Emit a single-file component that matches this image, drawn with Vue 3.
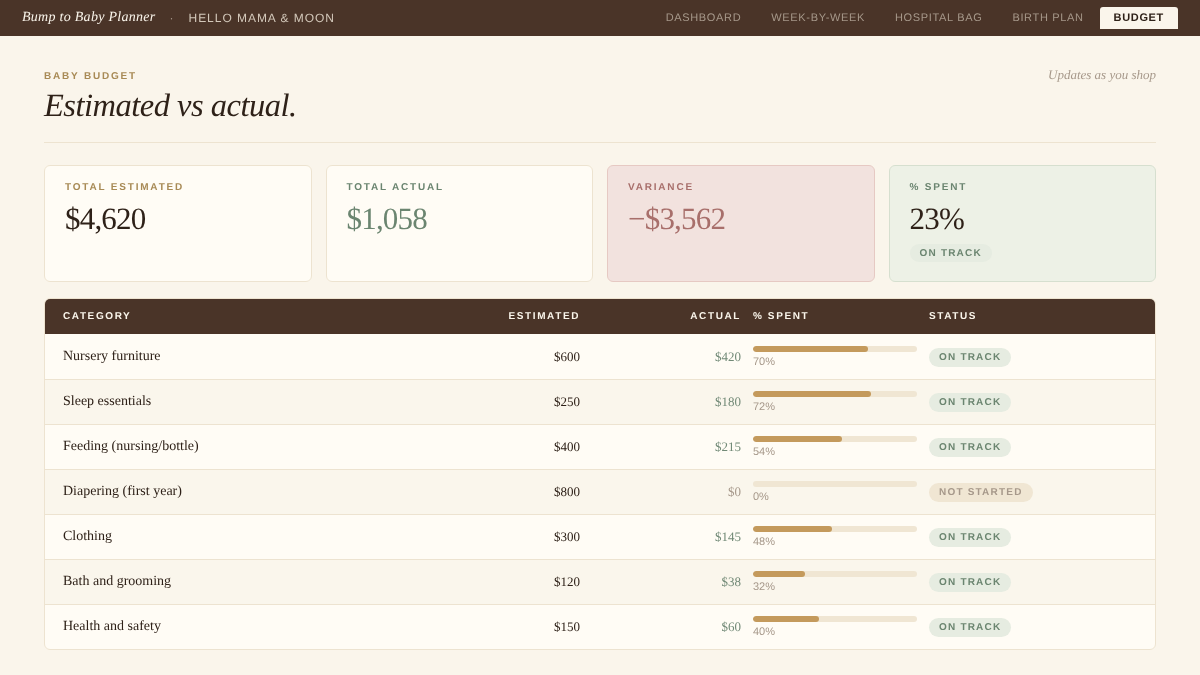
<template>
  <div class="page">
    <header class="topbar">
      <div class="brand">
        <span class="brand-name">Bump to Baby Planner</span>
        <span class="brand-dot">·</span>
        <span class="brand-sub">HELLO MAMA &amp; MOON</span>
      </div>
      <nav class="nav">
        <a
          v-for="item in navItems"
          :key="item"
          class="nav-item"
          :class="{ active: item === 'BUDGET' }"
        >{{ item }}</a>
      </nav>
    </header>

    <main class="content">
      <div class="title-row">
        <div>
          <div class="eyebrow">BABY BUDGET</div>
          <h1>Estimated vs actual.</h1>
        </div>
        <div class="note">Updates as you shop</div>
      </div>

      <section class="stats">
        <div v-for="stat in stats" :key="stat.label" class="stat" :class="stat.kind">
          <div class="stat-label">{{ stat.label }}</div>
          <div class="stat-value">{{ stat.value }}</div>
          <span v-if="stat.pill" class="stat-pill">{{ stat.pill }}</span>
        </div>
      </section>

      <section class="table">
        <div class="row head">
          <div>CATEGORY</div>
          <div class="right">ESTIMATED</div>
          <div class="right">ACTUAL</div>
          <div>% SPENT</div>
          <div>STATUS</div>
        </div>
        <div v-for="row in rows" :key="row.name" class="row body">
          <div class="name">{{ row.name }}</div>
          <div class="right est">{{ row.estimated }}</div>
          <div class="right actual" :class="{ zero: row.pct === 0 }">{{ row.actual }}</div>
          <div class="spent">
            <div class="track">
              <div class="fill" :style="{ width: row.pct + '%' }"></div>
            </div>
            <div class="pct">{{ row.pct }}%</div>
          </div>
          <div>
            <span class="badge" :class="{ idle: row.pct === 0 }">{{ row.pct === 0 ? 'NOT STARTED' : 'ON TRACK' }}</span>
          </div>
        </div>
      </section>
    </main>
  </div>
</template>

<script setup>
const navItems = ['DASHBOARD', 'WEEK-BY-WEEK', 'HOSPITAL BAG', 'BIRTH PLAN', 'BUDGET'];

const stats = [
  { label: 'TOTAL ESTIMATED', value: '$4,620', kind: 'gold' },
  { label: 'TOTAL ACTUAL', value: '$1,058', kind: 'sage' },
  { label: 'VARIANCE', value: '−$3,562', kind: 'rose' },
  { label: '% SPENT', value: '23%', kind: 'green', pill: 'ON TRACK' }
];

const rows = [
  { name: 'Nursery furniture', estimated: '$600', actual: '$420', pct: 70 },
  { name: 'Sleep essentials', estimated: '$250', actual: '$180', pct: 72 },
  { name: 'Feeding (nursing/bottle)', estimated: '$400', actual: '$215', pct: 54 },
  { name: 'Diapering (first year)', estimated: '$800', actual: '$0', pct: 0 },
  { name: 'Clothing', estimated: '$300', actual: '$145', pct: 48 },
  { name: 'Bath and grooming', estimated: '$120', actual: '$38', pct: 32 },
  { name: 'Health and safety', estimated: '$150', actual: '$60', pct: 40 }
];
</script>

<style>
html, body {
  margin: 0;
  background: #faf5eb;
}
</style>

<style scoped>
.page {
  width: 1200px;
  height: 675px;
  overflow: hidden;
  font-family: "Liberation Sans", Arial, sans-serif;
  color: #2e2118;
  text-rendering: geometricPrecision;
  will-change: transform;
}

.topbar {
  height: 36px;
  background: #4a3428;
  display: flex;
  justify-content: space-between;
  padding: 0 22px;
  box-sizing: border-box;
}

.brand {
  display: flex;
  align-items: center;
}

.brand-name {
  font-family: "Liberation Serif", serif;
  font-style: italic;
  font-size: 14px;
  letter-spacing: 0.28px;
  color: #faf5eb;
}

.brand-dot {
  margin: 0 15px 0 14px;
  font-size: 12px;
  color: #a6988a;
}

.brand-sub {
  font-size: 12px;
  letter-spacing: 0.96px;
  color: #d3c8ba;
}

.nav {
  display: flex;
  align-items: flex-start;
  padding-top: 7px;
  gap: 2px;
}

.nav-item {
  padding: 4px 14px;
  height: 14px;
  line-height: 14px;
  font-size: 11px;
  letter-spacing: 0.66px;
  color: #a6988a;
}

.nav-item.active {
  background: #faf5eb;
  color: #2e2118;
  font-weight: 700;
  border-radius: 3px 3px 0 0;
}

.content {
  padding: 32px 44px 0;
}

.title-row {
  display: flex;
  justify-content: space-between;
  align-items: flex-start;
  padding-bottom: 17px;
  border-bottom: 1px solid #ede3d0;
}

.eyebrow {
  font-size: 10px;
  font-weight: 700;
  letter-spacing: 1.8px;
  line-height: 14px;
  margin-top: 2px;
  color: #a88a55;
}

h1 {
  margin: 3px 0 0;
  font-family: "Liberation Serif", serif;
  font-style: italic;
  font-weight: 400;
  font-size: 32.5px;
  line-height: 38px;
  letter-spacing: -0.5px;
  color: #2e2118;
}

.note {
  margin-top: -1px;
  font-family: "Liberation Serif", serif;
  font-style: italic;
  font-size: 13px;
  line-height: 16px;
  color: #a6988a;
}

.stats {
  display: grid;
  grid-template-columns: repeat(4, 1fr);
  gap: 14px;
  margin-top: 22px;
}

.stat {
  height: 117px;
  box-sizing: border-box;
  padding: 16px 20px 14px;
  border: 1px solid #ede3d0;
  border-radius: 6px;
  background: #fffcf5;
}

.stat-label {
  font-size: 10px;
  font-weight: 700;
  letter-spacing: 1.8px;
  line-height: 12px;
}

.stat-value {
  margin-top: 7px;
  font-family: "Liberation Serif", serif;
  font-size: 31px;
  line-height: 36px;
  letter-spacing: -0.8px;
}

.gold .stat-label { color: #a88a55; }
.sage .stat-label { color: #6b8570; }
.sage .stat-value { color: #6b8570; }
.rose { background: #f2e2de; border-color: #e6c9c3; }
.rose .stat-label { color: #a86f6b; }
.rose .stat-value { color: #a86f6b; }
.green { background: #edf1e6; border-color: #d6dfcf; }
.green .stat-label { color: #6b8570; }

.stat-pill {
  display: inline-block;
  margin-top: 7px;
  padding: 4px 10px 2px;
  border-radius: 10px;
  background: #e6ece1;
  font-size: 10px;
  font-weight: 700;
  letter-spacing: 1.2px;
  line-height: 12px;
  color: #6b8570;
}

.table {
  margin-top: 16px;
  border: 1px solid #ede3d0;
  border-radius: 6px;
  overflow: hidden;
  background: #fffcf5;
}

.row {
  display: grid;
  grid-template-columns: 356px 149px 149px 164px 1fr;
  column-gap: 12px;
  padding: 0 18px;
  align-items: center;
}

.head {
  height: 35px;
  background: #4a3428;
  color: #faf5eb;
  font-size: 10px;
  font-weight: 700;
  letter-spacing: 1.6px;
}

.body {
  height: 45px;
  box-sizing: border-box;
  border-top: 1px solid #ede3d0;
}

.head + .body {
  border-top: none;
}

.body:nth-child(odd) {
  background: #faf6ec;
}

.right {
  text-align: right;
}

.name {
  font-family: "Liberation Serif", serif;
  font-size: 14px;
  color: #2e2118;
}

.est, .actual {
  font-family: "Liberation Serif", serif;
  font-size: 13px;
}

.actual {
  color: #728a77;
}

.actual.zero {
  color: #a6988a;
}

.track {
  height: 6px;
  border-radius: 3px;
  background: #f0e6d3;
  overflow: hidden;
}

.fill {
  height: 100%;
  border-radius: 3px;
  background: #c49a5c;
}

.pct {
  margin: 3px 0 -1px;
  font-size: 11px;
  line-height: 14px;
  color: #a6988a;
}

.badge {
  display: inline-block;
  padding: 3px 10px;
  border-radius: 10px;
  background: #e6ece1;
  font-size: 10px;
  font-weight: 700;
  letter-spacing: 1.2px;
  line-height: 13px;
  color: #6b8570;
}

.badge.idle {
  background: #f0e6d3;
  color: #a6988a;
}
</style>
